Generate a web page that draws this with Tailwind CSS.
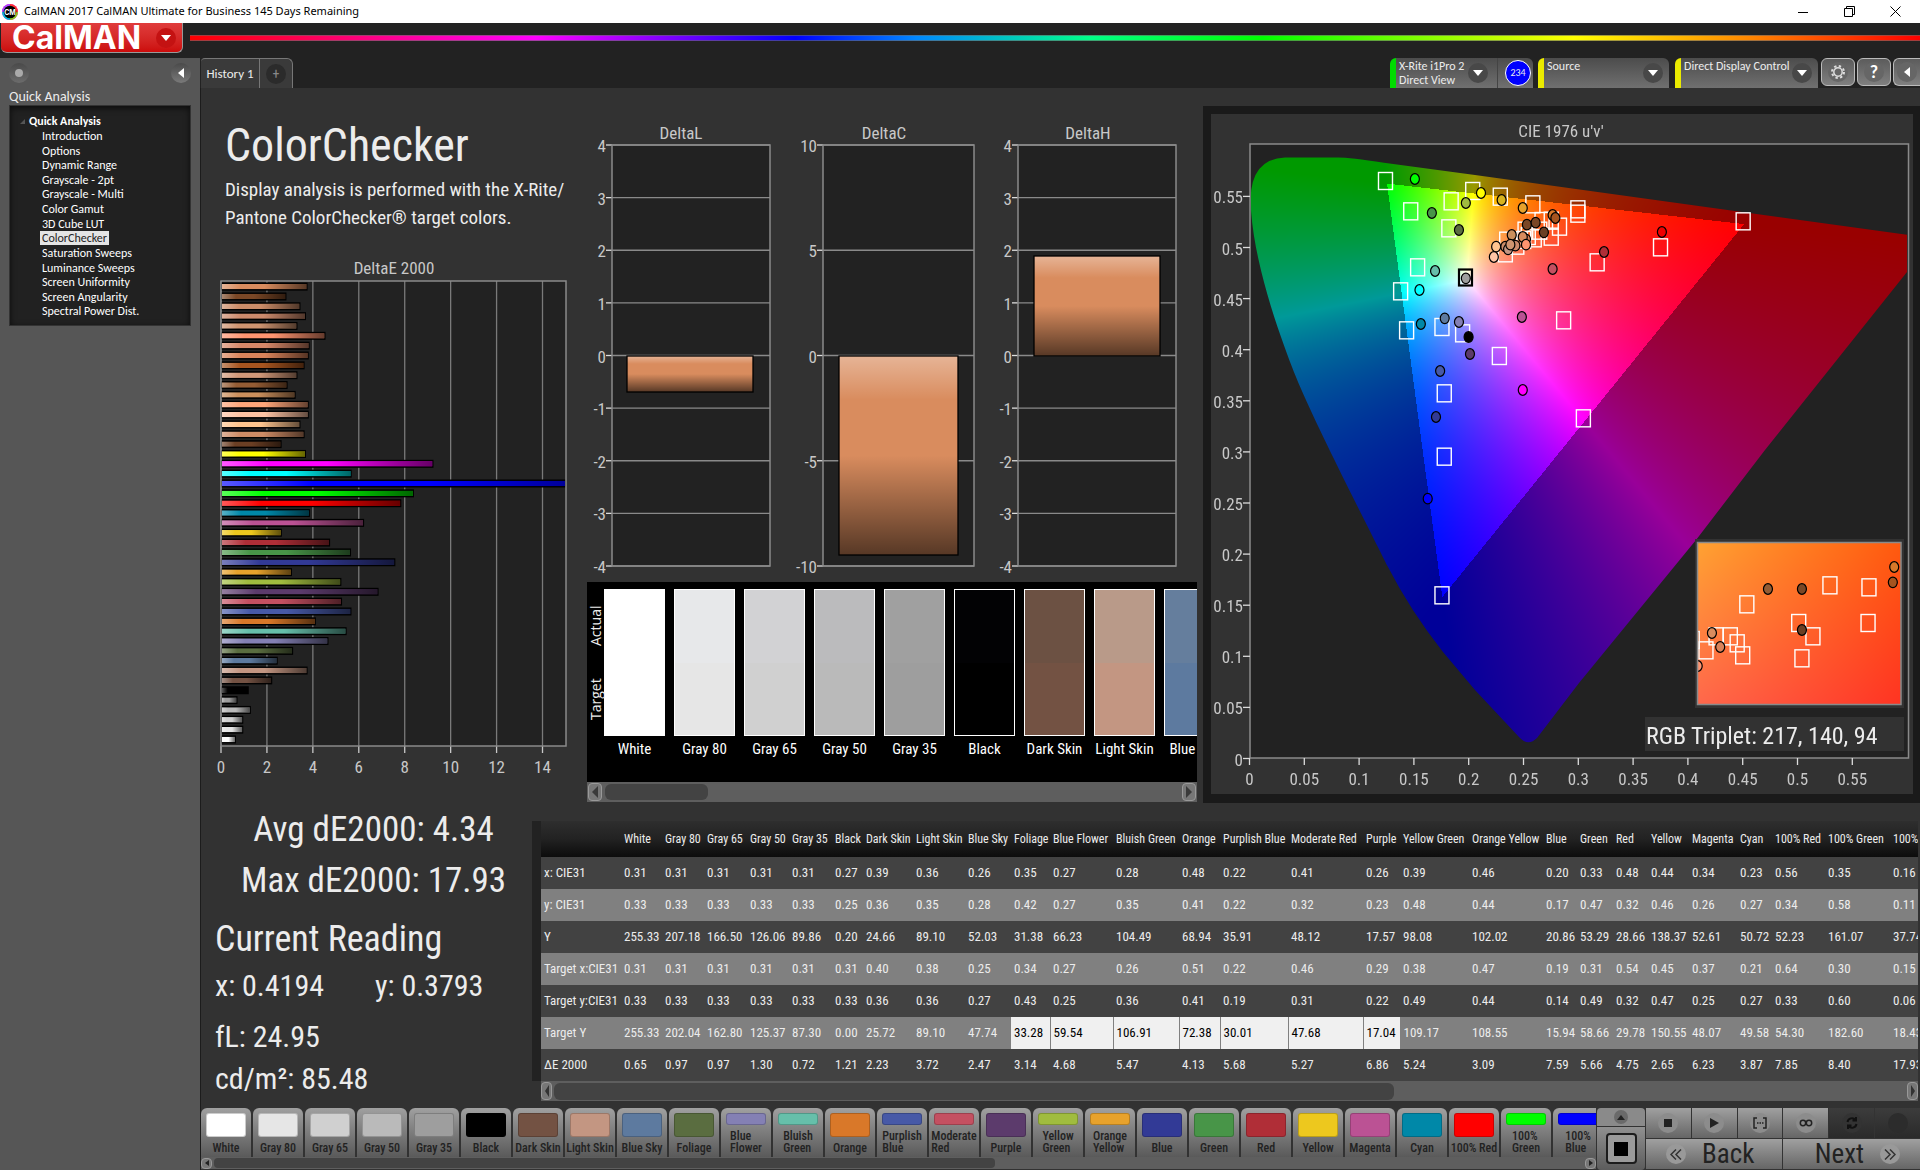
<!DOCTYPE html>
<html lang="en">
<head>
<meta charset="utf-8">
<title>CalMAN 2017 CalMAN Ultimate for Business</title>
<script src="https://cdn.jsdelivr.net/npm/@tailwindcss/browser@4"></script>
</head>
<body class="flex min-h-screen flex-col overflow-x-hidden bg-[#222] font-['Roboto_Condensed',Roboto,sans-serif] text-[#ececec]">

<!-- Window title bar -->
<header class="flex h-[23px] items-center bg-white pl-[2px] text-black">
  <svg class="h-4 w-4" viewBox="0 0 16 16">
    <circle cx="8" cy="8" r="8" fill="#e0c"/><path d="M8 8 0 8A8 8 0 0 1 8 0z" fill="#a4f"/><path d="M8 8V0a8 8 0 0 1 8 8z" fill="#f33"/><path d="M8 8h8a8 8 0 0 1-8 8z" fill="#8c2"/><path d="M8 8v8a8 8 0 0 1-8-8z" fill="#0bd"/>
    <circle cx="8" cy="8" r="6.3" fill="#000"/>
    <text x="8" y="10.5" font-size="7" font-weight="700" text-anchor="middle" fill="#fff" font-family="Inter,sans-serif">CM</text>
  </svg>
  <span class="ml-[6px] font-['Noto_Sans',sans-serif] text-[11px]">CalMAN 2017 CalMAN Ultimate for Business 145 Days Remaining</span>
  <div class="ml-auto flex h-full pr-[2px]">
    <button class="grid w-[46px] place-items-center" aria-label="Minimize"><svg width="10" height="10" viewBox="0 0 10 10"><path d="M0 5.5h10" stroke="#000"/></svg></button>
    <button class="grid w-[46px] place-items-center" aria-label="Restore"><svg width="11" height="11" viewBox="0 0 11 11" fill="none" stroke="#000"><path d="M.5 2.5h8v8h-8zM2.5 2.5v-2h8v8h-2"/></svg></button>
    <button class="grid w-[46px] place-items-center" aria-label="Close"><svg width="11" height="11" viewBox="0 0 11 11"><path d="M.5.5l10 10M10.500.5l-10 10" stroke="#000"/></svg></button>
  </div>
</header>

<!-- Brand row -->
<div class="flex h-[35px] shrink-0 bg-[#222]">
  <button class="ml-[1px] flex h-[30px] w-[182px] items-center rounded-b-md border-r border-b border-[#999] bg-linear-to-b from-[#e03c3c] to-[#cc0a0a] pl-[11px] font-['Inter',sans-serif] text-[32px] leading-none font-bold text-white">
    CalMAN
    <span class="mr-[6px] ml-auto grid h-5 w-5 place-items-center rounded-full bg-[#c41212]"><svg width="10" height="6"><path d="M0 0h10L5 6z" fill="#fff"/></svg></span>
  </button>
  <div class="mt-[12px] ml-[7px] h-[6px] grow border-y border-[#666]/60 bg-[linear-gradient(90deg,#f00_0%,#f0f_20%,#00f_35%,#08f_42%,#0f8_52%,#0f0_62%,#ff0_80%,#f80_90%,#f00_100%)]"></div>
</div>

<div class="flex grow">
  <!-- Sidebar -->
  <aside class="w-[200px] shrink-0 bg-[#565656] px-[9px] pt-[5px] font-['Carlito','Lato',sans-serif]">
    <div class="flex h-5 items-center justify-between">
      <span class="grid h-5 w-5 place-items-center rounded-full bg-linear-to-b from-[#4a4a4a] to-[#6c6c6c]"><i class="h-2 w-2 rounded-full bg-[#aaa]"></i></span>
      <button class="grid h-5 w-5 place-items-center rounded-full bg-linear-to-b from-[#4a4a4a] to-[#7a7a7a]" aria-label="Collapse sidebar"><svg width="6" height="10"><path d="M6 0v10L0 5z" fill="#fff"/></svg></button>
    </div>
    <h2 class="mt-[6px] text-[14px] leading-4">Quick Analysis</h2>
    <nav class="h-[221px] border border-[#333] bg-[#212121] pt-[7px] text-[12px] text-white shadow-[inset_0_2px_6px_#000a]">
      <div class="flex items-center gap-1 pl-[10px] text-[12px] leading-4 font-bold"><svg width="5" height="5"><path d="M5 0v5H0z" fill="#555"/></svg>Quick Analysis</div>
      <ul id="tree" class="grid h-[190px] auto-rows-fr pl-[30px] leading-[14px]"></ul>
    </nav>
  </aside>

  <div class="flex min-w-0 grow flex-col">
    <!-- Tabs and device bar -->
    <div class="flex h-[30px] shrink-0 items-start pl-px">
      <button class="h-[30px] w-[59px] rounded-tl border-t border-r border-[#777] bg-[#3a3a3a] font-['Carlito','Lato',sans-serif] text-[13px]">History 1</button>
      <button class="grid h-[30px] w-[33px] place-items-center rounded-tr-md border-t border-r border-[#777] bg-[#3a3a3a]" aria-label="Add tab"><span class="grid h-5 w-5 place-items-center rounded-full bg-[#2b2b2b] text-[14px] leading-none text-[#888]">+</span></button>
      <div class="ml-auto flex items-start font-['Carlito','Lato',sans-serif] text-[12px] leading-[14px]">
        <button class="mr-[5px] flex h-[30px] w-[143px] items-center rounded-t-md border-l-6 border-[#00dc00] bg-linear-to-b from-[#4c4c4c] to-[#707070] pl-[3px] text-left">
          <span class="w-[66px] whitespace-nowrap">X-Rite i1Pro 2<br>Direct View</span>
          <span class="ml-[3px] grid h-5 w-5 place-items-center rounded-full bg-[#484848]"><svg width="10" height="6"><path d="M0 0h10L5 6z" fill="#fff"/></svg></span>
          <span class="ml-[9px] h-full border-l border-[#444]"></span>
          <span class="ml-[7px] grid h-[26px] w-[26px] place-items-center rounded-full border border-white bg-[#00f] text-[10px]">234</span>
        </button>
        <button class="mr-[6px] flex h-[30px] w-[131px] justify-between rounded-t-md border-l-6 border-[#ebeb00] bg-linear-to-b from-[#4c4c4c] to-[#707070] pt-[1px] pr-[6px] pl-[3px]">Source
          <span class="mt-1 grid h-5 w-5 place-items-center rounded-full bg-[#484848]"><svg width="10" height="6"><path d="M0 0h10L5 6z" fill="#fff"/></svg></span></button>
        <button class="mr-[3px] flex h-[30px] w-[143px] justify-between rounded-t-md border-l-6 border-[#ebeb00] bg-linear-to-b from-[#4c4c4c] to-[#707070] pt-[1px] pr-[6px] pl-[3px] whitespace-nowrap">Direct Display Control
          <span class="mt-1 grid h-5 w-5 place-items-center rounded-full bg-[#484848]"><svg width="10" height="6"><path d="M0 0h10L5 6z" fill="#fff"/></svg></span></button>
        <button class="mr-[2px] grid h-[28px] w-[34px] place-items-center rounded-md border border-[#bbb] bg-linear-to-b from-[#5c5c5c] to-[#808080]" aria-label="Settings"><span class="grid h-5 w-5 place-items-center rounded-full bg-[#666]"><svg width="16" height="16" viewBox="0 0 16 16" fill="none" stroke="#ddd"><circle cx="8" cy="8" r="4.200" stroke-width="1.500"/><circle cx="8" cy="8" r="6" stroke-width="2" stroke-dasharray="2.360"/></svg></span></button>
        <button class="mr-[2px] grid h-[28px] w-[34px] place-items-center rounded-md border border-[#bbb] bg-linear-to-b from-[#5c5c5c] to-[#808080]" aria-label="Help"><span class="grid h-5 w-5 place-items-center rounded-full bg-[#666] text-[18px] font-bold text-white">?</span></button>
        <button class="grid h-[28px] w-[27px] place-items-center rounded-l-md border border-r-0 border-[#bbb] bg-linear-to-b from-[#5c5c5c] to-[#808080]" aria-label="Collapse panel"><span class="grid h-5 w-5 place-items-center rounded-full bg-[#666]"><svg width="6" height="10"><path d="M6 0v10L0 5z" fill="#fff"/></svg></span></button>
      </div>
    </div>

    <main class="flex grow flex-col border-l border-[#1c1c1c] bg-[#323232]">
      <div class="grid grid-cols-[minmax(0,386fr)_minmax(0,616fr)_minmax(0,717fr)]">
        <section class="pt-[25px]">
          <h1 class="pl-[24px] text-[46px] leading-[64px]">ColorChecker</h1>
          <p class="-mt-px pl-[24px] text-[19px] leading-7 whitespace-nowrap">Display analysis is performed with the X-Rite/<br>Pantone ColorChecker® target colors.</p>
          <svg id="de" class="mt-[18px] block w-full" viewBox="201 250 386 530"></svg>
        </section>
        <section class="pt-[22px] pr-[6px]">
          <svg id="delta" class="block w-full" viewBox="587 110 610 472"></svg>
          <div class="flex h-[200px] overflow-hidden bg-black pt-[7px]">
            <div class="flex h-[147px] w-[17px] shrink-0 rotate-180 font-['Open_Sans',sans-serif] text-[14px] leading-[17px] [writing-mode:vertical-rl]">
              <span class="flex-1 text-center">Target</span><span class="flex-1 text-center">Actual</span>
            </div>
            <div id="patches" class="flex gap-[9px]"></div>
          </div>
          <div class="flex h-5 items-center gap-[3px] bg-[#5e5e5e] px-[1px]">
            <button class="grid h-[18px] w-[14px] place-items-center rounded border border-[#999] bg-[#777]" aria-label="Scroll left"><svg width="6" height="12"><path d="M6 0v12L0 6z" fill="#3a3a3a"/></svg></button>
            <span class="h-[16px] w-[103px] rounded-md bg-[#434343]"></span>
            <button class="ml-auto grid h-[18px] w-[14px] place-items-center rounded border border-[#999] bg-[#777]" aria-label="Scroll right"><svg width="6" height="12"><path d="M0 0v12l6-6z" fill="#3a3a3a"/></svg></button>
          </div>
        </section>
        <section class="pt-[18px]">
          <div class="border-8 border-r-7 border-b-9 border-[#1a1a1a]">
            <div class="relative">
              <canvas id="gamut" width="702" height="680" class="absolute inset-0 h-full w-full"></canvas>
              <svg id="cie" class="relative block w-full" viewBox="1211 114 702 680"></svg>
            </div>
          </div>
        </section>
      </div>

      <div class="mt-[18px] flex grow">
        <section class="w-[331px] shrink-0 pl-[14px]">
          <div class="-mt-[17px] text-center text-[35px] leading-[51px] whitespace-nowrap">Avg dE2000: 4.34<br>Max dE2000: 17.93</div>
          <h2 class="mt-[5px] text-[36px] leading-[56px]">Current Reading</h2>
          <div class="-mt-[2px] text-[30px] leading-[42px]">
            <div class="flex"><div class="w-[160px]">x: 0.4194</div><div>y: 0.3793</div></div>
            <div class="mt-[9px]">fL: 24.95</div>
            <div>cd/m²: 85.48</div>
          </div>
        </section>
        <section class="mr-[2px] min-w-0 grow overflow-hidden">
          <div class="overflow-hidden border-l-9 border-[#222]">
            <table class="w-[1404px] table-fixed text-[13px] whitespace-nowrap"><colgroup id="cols"></colgroup><thead id="th" class="bg-linear-to-b from-[#2e2e2e] via-[#222] to-[#0c0c0c]"></thead><tbody id="tb"></tbody></table>
          </div>
          <div class="ml-[9px] flex h-[20px] items-center gap-[2px] bg-[#5e5e5e]">
            <button class="grid h-[18px] w-[11px] place-items-center rounded border border-[#999] bg-[#777]" aria-label="Scroll left"><svg width="4" height="12"><path d="M4 0v12L0 6z" fill="#333"/></svg></button>
            <span class="h-[17px] w-[61%] rounded-md bg-[#434343]"></span>
            <button class="ml-auto grid h-[18px] w-[11px] place-items-center rounded border border-[#999] bg-[#777]" aria-label="Scroll right"><svg width="4" height="12"><path d="M0 0v12l4-6z" fill="#333"/></svg></button>
          </div>
        </section>
      </div>

      <!-- Pattern bar and transport -->
      <footer class="mt-[6px] flex h-[62px] shrink-0">
        <div class="flex min-w-0 grow flex-col">
          <div id="patterns" class="flex h-[49px] gap-[2px] overflow-hidden"></div>
          <div class="flex h-[12px] items-center gap-[2px] bg-[#5e5e5e]">
            <button class="grid h-[11px] w-[11px] place-items-center rounded border border-[#999] bg-[#777]" aria-label="Scroll left"><svg width="4" height="6"><path d="M4 0v6L0 3z" fill="#222"/></svg></button>
            <span class="h-[10px] w-[56%] rounded bg-[#434343]"></span>
            <button class="ml-auto grid h-[11px] w-[11px] place-items-center rounded border border-[#999] bg-[#777]" aria-label="Scroll right"><svg width="4" height="6"><path d="M0 0v6l4-3z" fill="#222"/></svg></button>
          </div>
        </div>
        <div class="mx-px flex w-[48px] shrink-0 flex-col gap-px">
          <button class="grid h-[18px] place-items-center rounded-t bg-[#8a8a8a]" aria-label="Expand"><span class="grid h-[14px] w-[14px] place-items-center rounded-full bg-[#6a6a6a]"><svg width="8" height="5"><path d="M0 5h8L4 0z" fill="#222"/></svg></span></button>
          <button class="grid h-[43px] place-items-center rounded-b bg-linear-to-b from-[#909090] to-[#5c5c5c]" aria-label="Pattern window"><span class="grid h-[31px] w-[31px] place-items-center rounded border-2 border-[#1c1c1c] bg-[#9a9a9a]"><i class="h-[14px] w-[14px] bg-black"></i></span></button>
        </div>
        <div class="grid w-[274px] shrink-0 grid-cols-6 grid-rows-[30px_30px] gap-px bg-[#333] text-[#222]">
          <button class="grid place-items-center bg-linear-to-b from-[#a0a0a0] to-[#666]" aria-label="Stop"><span class="grid h-5 w-5 place-items-center rounded-full bg-[#8c8c8c]"><i class="h-2 w-2 bg-[#222]"></i></span></button>
          <button class="grid place-items-center bg-linear-to-b from-[#a0a0a0] to-[#666]" aria-label="Play"><span class="grid h-5 w-5 place-items-center rounded-full bg-[#8c8c8c]"><svg width="9" height="10"><path d="M0 0v10l9-5z" fill="#222"/></svg></span></button>
          <button class="grid place-items-center bg-linear-to-b from-[#a0a0a0] to-[#666]" aria-label="Read series"><span class="grid h-5 w-5 place-items-center rounded-full bg-[#8c8c8c]"><svg width="14" height="12" fill="none" stroke="#222" stroke-width="1.500"><path d="M4 1H1v10h3M10 1h3v10h-3M4 6h1.500M6.500 6H8M9 6h1.500"/></svg></span></button>
          <button class="grid place-items-center bg-linear-to-b from-[#a0a0a0] to-[#666]" aria-label="Continuous"><span class="grid h-5 w-5 place-items-center rounded-full bg-[#8c8c8c]"><svg width="14" height="8" fill="none" stroke="#222" stroke-width="1.500"><circle cx="4" cy="4" r="2.700"/><circle cx="10" cy="4" r="2.700"/></svg></span></button>
          <button class="grid place-items-center bg-linear-to-b from-[#3c3c3c] to-[#2a2a2a]" aria-label="Refresh"><span class="grid h-5 w-5 place-items-center rounded-full bg-[#333]"><svg width="14" height="14" viewBox="0 0 14 14" fill="none" stroke="#111" stroke-width="2"><path d="M2.500 6a4.500 4.500 0 0 1 8-2M11.500 8a4.500 4.500 0 0 1-8 2M11 1v3.500H7.500M3 13V9.500h3.500"/></svg></span></button>
          <button class="grid place-items-center bg-linear-to-b from-[#3c3c3c] to-[#2a2a2a]" aria-label="Record"><span class="h-5 w-5 rounded-full bg-[#2c2c2c]"></span></button>
          <button class="col-span-3 flex items-center gap-4 bg-linear-to-b from-[#a0a0a0] to-[#666] pl-[20px] text-[27px] leading-none"><span class="grid h-5 w-5 place-items-center rounded-full bg-[#999]"><svg width="12" height="11" fill="none" stroke="#333" stroke-width="1.500"><path d="M6 .5l-5 5 5 5M11 .5l-5 5 5 5"/></svg></span>Back</button>
          <button class="col-span-3 flex items-center justify-end gap-4 bg-linear-to-b from-[#a0a0a0] to-[#666] pr-[20px] text-[27px] leading-none">Next<span class="grid h-5 w-5 place-items-center rounded-full bg-[#999]"><svg width="12" height="11" fill="none" stroke="#333" stroke-width="1.500"><path d="M1 .5l5 5-5 5M6 .5l5 5-5 5"/></svg></span></button>
        </div>
      </footer>
    </main>
  </div>
</div>

<script>
const $ = id => document.getElementById(id);

// Workflow tree
$('tree').innerHTML = ['Introduction','Options','Dynamic Range','Grayscale - 2pt','Grayscale - Multi','Color Gamut','3D Cube LUT','ColorChecker','Saturation Sweeps','Luminance Sweeps','Screen Uniformity','Screen Angularity','Spectral Power Dist.']
  .map(t => `<li><a href="#" class="${t === 'ColorChecker' ? 'inline-block bg-[#e4e4e4] px-[2px] text-[#222]' : 'inline-block px-[2px]'}">${t}</a></li>`).join('');

// Patches: name, target colour, measured colour, column width
const P = [['White','#ffffff','#ffffff',41],['Gray 80','#e6e6e6','#e7e8ea',42],['Gray 65','#d0d0d0','#d2d2d4',43],['Gray 50','#bababa','#bbbbbd',42],['Gray 35','#9e9e9e','#a0a0a0',43],['Black','#000000','#020204',31],['Dark Skin','#735243','#6c5143',50],['Light Skin','#c39682','#b99a89',52],['Blue Sky','#5d7a9f','#657e9d',46],['Foliage','#5a6d40','',39],['Blue Flower','#8480b4','',63],['Bluish Green','#66bfaa','',66],['Orange','#d97829','',41],['Purplish Blue','#4759a7','',68],['Moderate Red','#c45061','',75],['Purple','#5c3b6c','',37],['Yellow Green','#a0bc3f','',69],['Orange Yellow','#e7a22c','',74],['Blue','#323a96','',34],['Green','#489548','',36],['Red','#b02e37','',35],['Yellow','#edc81e','',41],['Magenta','#bb5294','',48],['Cyan','#0088a8','',35],['100% Red','#ff0000','',53],['100% Green','#00ff00','',65],['100% Blue','#0000ff','',56]];

$('patches').innerHTML = P.slice(0, 9).map(p => `<div class="w-[61px] shrink-0 text-center text-[15px] leading-[26px] whitespace-nowrap text-white"><div class="flex h-[147px] flex-col border border-white"><div class="flex-1" style="background:${p[2]}"></div><div class="flex-1" style="background:${p[1]}"></div></div>${p[0]}</div>`).join('');

const two = n => ['Blue Flower','Bluish Green','Purplish Blue','Moderate Red','Yellow Green','Orange Yellow','100% Green','100% Blue'].includes(n);
$('patterns').innerHTML = P.map(p => `<button class="flex w-[50px] shrink-0 flex-col items-center rounded-t-md bg-linear-to-b from-[#a0a0a0] to-[#5a5a5a] pt-[5px] text-[12px] leading-[12px] font-medium text-[#222]"><span class="${two(p[0]) ? 'h-[12px] w-10 shrink-0 rounded-[3px] border border-black/20' : 'h-6 w-10 shrink-0 rounded-[3px] border border-black/20'}" style="background:${p[1]}"></span><span class="${two(p[0]) ? 'mt-[5px] text-left' : 'mt-[5px] whitespace-nowrap'}">${two(p[0]) ? p[0].replace(' ', '<br>') : p[0]}</span></button>`).join('');

// Data table
const rows = {
 'x: CIE31':'0.31 0.31 0.31 0.31 0.31 0.27 0.39 0.36 0.26 0.35 0.27 0.28 0.48 0.22 0.41 0.26 0.39 0.46 0.20 0.33 0.48 0.44 0.34 0.23 0.56 0.35 0.16',
 'y: CIE31':'0.33 0.33 0.33 0.33 0.33 0.25 0.36 0.35 0.28 0.42 0.27 0.35 0.41 0.22 0.32 0.23 0.48 0.44 0.17 0.47 0.32 0.46 0.26 0.27 0.34 0.58 0.11',
 'Y':'255.33 207.18 166.50 126.06 89.86 0.20 24.66 89.10 52.03 31.38 66.23 104.49 68.94 35.91 48.12 17.57 98.08 102.02 20.86 53.29 28.66 138.37 52.61 50.72 52.23 161.07 37.74',
 'Target x:CIE31':'0.31 0.31 0.31 0.31 0.31 0.31 0.40 0.38 0.25 0.34 0.27 0.26 0.51 0.22 0.46 0.29 0.38 0.47 0.19 0.31 0.54 0.45 0.37 0.21 0.64 0.30 0.15',
 'Target y:CIE31':'0.33 0.33 0.33 0.33 0.33 0.33 0.36 0.36 0.27 0.43 0.25 0.36 0.41 0.19 0.31 0.22 0.49 0.44 0.14 0.49 0.32 0.47 0.25 0.27 0.33 0.60 0.06',
 'Target Y':'255.33 202.04 162.80 125.37 87.30 0.00 25.72 89.10 47.74 33.28 59.54 106.91 72.38 30.01 47.68 17.04 109.17 108.55 15.94 58.66 29.78 150.55 48.07 49.58 54.30 182.60 18.43',
 'ΔE 2000':'0.65 0.97 0.97 1.30 0.72 1.21 2.23 3.72 2.47 3.14 4.68 5.47 4.13 5.68 5.27 6.86 5.24 3.09 7.59 5.66 4.75 2.65 6.23 3.87 7.85 8.40 17.93'};
$('cols').innerHTML = '<col style="width:80px">' + P.map(p => `<col style="width:${p[3]}px">`).join('');
$('th').innerHTML = '<tr class="h-[36px] text-left text-[12px]"><th></th>' + P.map(p => `<th class="pl-[3px] font-normal">${p[0]}</th>`).join('') + '</tr>';
$('tb').innerHTML = Object.entries(rows).map(([k, v], r) => `<tr class="${r % 2 ? 'h-8 bg-[#808080]' : 'h-8 bg-[#424242]'}"><th class="pl-[3px] text-left font-normal">${k}</th>` + v.split(' ').map((c, i) => `<td class="${r === 5 && i > 8 && i < 16 ? 'border-r border-[#808080] bg-[#f0f0f0] pl-[3px] text-black' : 'pl-[3px]'}">${c}</td>`).join('') + '</tr>').join('');

// SVG helpers
const line = (x1, y1, x2, y2, c = '#7a7a7a', w = 1.3) => `<path d="M${x1} ${y1}L${x2} ${y2}" stroke="${c}" stroke-width="${w}"/>`;
const txt = (x, y, s, a = 'middle', z = 17, c = '#c8c8c8') => `<text x="${x}" y="${y}" text-anchor="${a}" font-size="${z}" fill="${c}">${s}</text>`;
const frame = (x, y, w, h) => `<rect x="${x}" y="${y}" width="${w}" height="${h}" fill="none" stroke="#8a8a8a" stroke-width="1.500"/>`;

// DeltaE 2000 bar chart
const bars = [['#d98c5e',3.77],['#7a4726',2.85],['#cb8c68',3.46],['#cc8a6c',3.7],['#cf9470',3.33],['#ff9470',4.55],['#d68768',3.86],['#d9835a',3.82],['#a6541f',3.64],['#d19878',3.33],['#945c34',2.9],['#cb8f5c',3.25],['#ffa67a',3.82],['#ffc4a4',3.82],['#ffc48f',3.46],['#cf8c66',3.64],['#6b3f24',2.64],['#ffff00',3.7],['#ff00ff',9.25],['#00ffff',5.69],['#0000ff',15.04],['#00ff00',8.4],['#ff0000',7.85],['#0088a8',3.87],['#bb5294',6.23],['#edc81e',2.65],['#b02e37',4.75],['#489548',5.66],['#323a96',7.59],['#e7a22c',3.09],['#a0bc3f',5.24],['#5c3b6c',6.86],['#c45061',5.27],['#4759a7',5.68],['#d97829',4.13],['#66bfaa',5.47],['#8480b4',4.68],['#5a6d40',3.14],['#5d7a9f',2.47],['#c39682',3.77],['#735243',2.23],['#000000',1.21],['#9e9e9e',.72],['#bababa',1.3],['#d0d0d0',.97],['#e6e6e6',.97],['#ffffff',.65]];
let s = `<defs><linearGradient id="sh"><stop offset="0" stop-color="#fff" stop-opacity=".35"/><stop offset=".22" stop-color="#fff" stop-opacity="0"/><stop offset=".5" stop-color="#000" stop-opacity="0"/><stop offset="1" stop-color="#000" stop-opacity=".6"/></linearGradient></defs><rect x="221" y="281" width="345" height="465" fill="#222"/>`;
s += txt(394, 274, 'DeltaE 2000');
for (let i = 0; i < 8; i++) { const x = 221 + i * 45.93; s += line(x, 281, x, 746) + line(x, 746, x, 753, '#c8c8c8') + txt(x, 773, i * 2); }
bars.forEach(([c, v], i) => { const y = 286.6 + i * 9.845, over = v > 15, w = over ? 345 : v * 22.97, f = over ? 414 : w - 2; s += `<rect x="221" y="${y - 4}" width="${w}" height="8" fill="#000"/><svg x="222" y="${y - 2.7}" width="${w - 2}" height="5.400"><rect width="${f}" height="5.400" fill="${c}"/><rect width="${f}" height="5.400" fill="url(#sh)"/></svg>`; });
$('de').innerHTML = s + frame(221, 281, 345, 465);

// DeltaL / DeltaC / DeltaH
const delta = (name, cx, x, w, lx, ticks, bx, bw, by, bh) => {
  let o = txt(cx, 139, name) + `<rect x="${x}" y="145" width="${w}" height="421" fill="#222"/>`;
  ticks.forEach((t, i) => { const y = 145 + i * 421 / (ticks.length - 1); o += line(x, y, x + w, y, '#8a8a8a') + line(x - 6, y, x, y, '#ddd') + txt(lx, y + 7, t, 'end'); });
  return o + frame(x, 145, w, 421) + `<rect x="${bx}" y="${by}" width="${bw}" height="${bh}" fill="#d98c5e"/><rect x="${bx}" y="${by}" width="${bw}" height="${bh}" fill="url(#shv)" stroke="#000" stroke-width="1.300"/>`;
};
const four = [4,3,2,1,0,-1,-2,-3,-4];
$('delta').innerHTML = `<defs><linearGradient id="shv" x2="0" y2="1"><stop offset="0" stop-color="#fff" stop-opacity=".35"/><stop offset=".22" stop-color="#fff" stop-opacity="0"/><stop offset=".5" stop-color="#000" stop-opacity="0"/><stop offset="1" stop-color="#000" stop-opacity=".6"/></linearGradient></defs>`
 + delta('DeltaL', 681, 612, 158, 606, four, 627, 126, 356, 36) + delta('DeltaC', 884, 823, 151, 817, [10,5,0,-5,-10], 839, 119, 356, 199) + delta('DeltaH', 1088, 1018, 158, 1012, four, 1034, 126, 256, 100);

// CIE 1976 diagram: colours computed per pixel from u'v'
const W = 702, H = 680, g = $('gamut').getContext('2d'), tmp = document.createElement('canvas');
tmp.width = W; tmp.height = H;
const tc = tmp.getContext('2d'), im = tc.createImageData(W, H), D = im.data;
for (let j = 0; j < H; j++) for (let i = 0; i < W; i++) {
  const u = (i + 1211 - 1249.5) / 1096, v = Math.max(.004, (758 - j - 114) / 1022);
  const X = 9 * u / (4 * v), Z = (12 - 3 * u - 20 * v) / (4 * v);
  let c = [3.2406 * X - 1.5372 - .4986 * Z, -.9689 * X + 1.8758 + .0415 * Z, .0557 * X - .204 + 1.057 * Z];
  const k = Math.min(...c) < 0 ? .6 : 1, m = Math.max(...c), q = (j * W + i) * 4;
  for (let n = 0; n < 3; n++) D[q + n] = 255 * k * Math.max(0, c[n]) / m;
  D[q + 3] = 255;
}
tc.putImageData(im, 0, 0);
g.fillStyle = '#323232'; g.fillRect(0, 0, W, H);
g.translate(-1211, -114);
g.fillStyle = '#222'; g.fillRect(1250, 144, 659, 614);
g.save();
g.clip(new Path2D('M1907 234.700L1742 212L1475 175L1384 162.700Q1350 157.500 1338 157.500H1285Q1251 159 1250.500 200C1252 260 1280 335 1292 367C1310 415 1375 540 1388 567Q1410 610 1443 652L1475 690L1519 737Q1528 747 1537 738L1579 683L1696 540L1765 450L1907 272z'));
g.drawImage(tmp, 1211, 114);
g.restore();
g.fillStyle = '#323232'; g.fillRect(1695, 539, 209, 169); g.fillRect(1645, 717, 259, 34);
// Magnified inset
const corner = [[255,162,50],[255,90,14],[255,104,76],[255,52,34]];
const im2 = g.createImageData(204, 162);
for (let j = 0; j < 162; j++) for (let i = 0; i < 204; i++) {
  const a = i / 203, b = j / 161, q = (j * 204 + i) * 4;
  for (let n = 0; n < 3; n++) im2.data[q + n] = (corner[0][n] * (1 - a) + corner[1][n] * a) * (1 - b) + (corner[2][n] * (1 - a) + corner[3][n] * a) * b;
  im2.data[q + 3] = 255;
}
g.putImageData(im2, 1697 - 1211, 542 - 114);

s = txt(1561, 137, "CIE 1976 u'v'") + frame(1250, 144, 658.5, 614);
for (let i = 0; i < 12; i++) {
  const l = +(i * .05).toFixed(2), x = 1249.5 + i * 54.8, y = 758.5 - i * 51.1;
  s += line(1243, y, 1250, y, '#ddd') + txt(1243, y + 7, l, 'end') + line(x, 758, x, 765, '#ddd') + txt(x, 785, l);
}
const sq = (x, y, c = '#fff') => `<rect x="${x - 7}" y="${y - 8.5}" width="14" height="17" fill="none" stroke="${c}" stroke-width="1.400"/>`;
const ci = (x, y, c) => `<ellipse cx="${x}" cy="${y}" rx="4.500" ry="5.300" fill="${c}" stroke="#000" stroke-width="1.200"/>`;
const A = (x, y) => [1200 + x / 2.178, 100 + y / 3], B = (x, y) => [1200 + x / 2.178, 450 + y / 3];
[[404,243],[459,334],[547,304],[594,273],[654,290],[542,385],[474,502],[437,574],[450,691],[527,681],[572,700],[652,768],[532,880],[532,1070],[725,313],[823,328],[823,341],[783,380],[745,363],[765,362],[765,410],[740,392],[708,392],[728,415],[715,408],[705,420],[668,422],[690,437],[665,460],[865,487],[1003,442],[1183,364],[792,661],[835,955]].forEach(p => s += sq(...A(...p)));
s += sq(...B(527, 436)) + `<rect x="1459" y="269.500" width="13" height="16" fill="none" stroke="#000" stroke-width="2.200"/>`;
[[468,237,'#00ff00'],[612,279,'#ffff00'],[657,300,'#d8b41e'],[579,309,'#a0bc3f'],[505,339,'#489548'],[564,390,'#5a6d40'],[703,324,'#e7a22c'],[768,345,'#d97829'],[774,354,'#a6541f'],[712,374,'#7a4726'],[731,368,'#7a4726'],[749,397,'#6b3f24'],[679,405,'#cb8f5c'],[710,418,'#d9835a'],[703,411,'#d98c5e'],[710,434,'#ff9470'],[645,440,'#ffc48f'],[665,440,'#cb8c68'],[671,448,'#c39682'],[687,437,'#cc8a6c'],[676,434,'#cf9470'],[640,471,'#ffc4a4'],[880,456,'#b02e37'],[1006,396,'#f00000'],[768,507,'#c45061'],[512,513,'#66bfaa'],[478,570,'#00ffff'],[481,672,'#0088a8'],[533,655,'#5d7a9f'],[564,666,'#8480b4'],[585,711,'#000'],[588,762,'#5c3b6c'],[701,651,'#bb5294'],[523,813,'#4759a7'],[703,870,'#ff00ff'],[514,951,'#323a96'],[579,535,'#9e9e9e']].forEach(([x, y, c]) => s += ci(...A(x, y), c));
s += ci(...B(496, 146), '#0000ff');
s += '<clipPath id="ic"><rect x="1698" y="542" width="203" height="162"/></clipPath><g clip-path="url(#ic)">';
[[1372,406],[1457,412],[1191,463],[1304,519],[1335,559],[1455,519],[1311,625],[1155,559],[1124,559],[1170,580],[1182,616],[1102,601],[1072,570]].forEach(p => s += sq(...B(...p)));
[[1512,351,'#d97829'],[1509,397,'#a6541f'],[1237,417,'#945c34'],[1311,417,'#7a4726'],[1311,540,'#6b3f24'],[1115,549,'#d98c5e'],[1133,591,'#d9835a'],[1084,648,'#ff9470']].forEach(([x, y, c]) => s += ci(...B(x, y), c));
s += '</g>' + frame(1697.5, 542.5, 203.5, 162) + txt(1646, 744, 'RGB Triplet: 217, 140, 94', 'start', 24, '#ececec');
$('cie').innerHTML = s;
</script>
</body>
</html>
